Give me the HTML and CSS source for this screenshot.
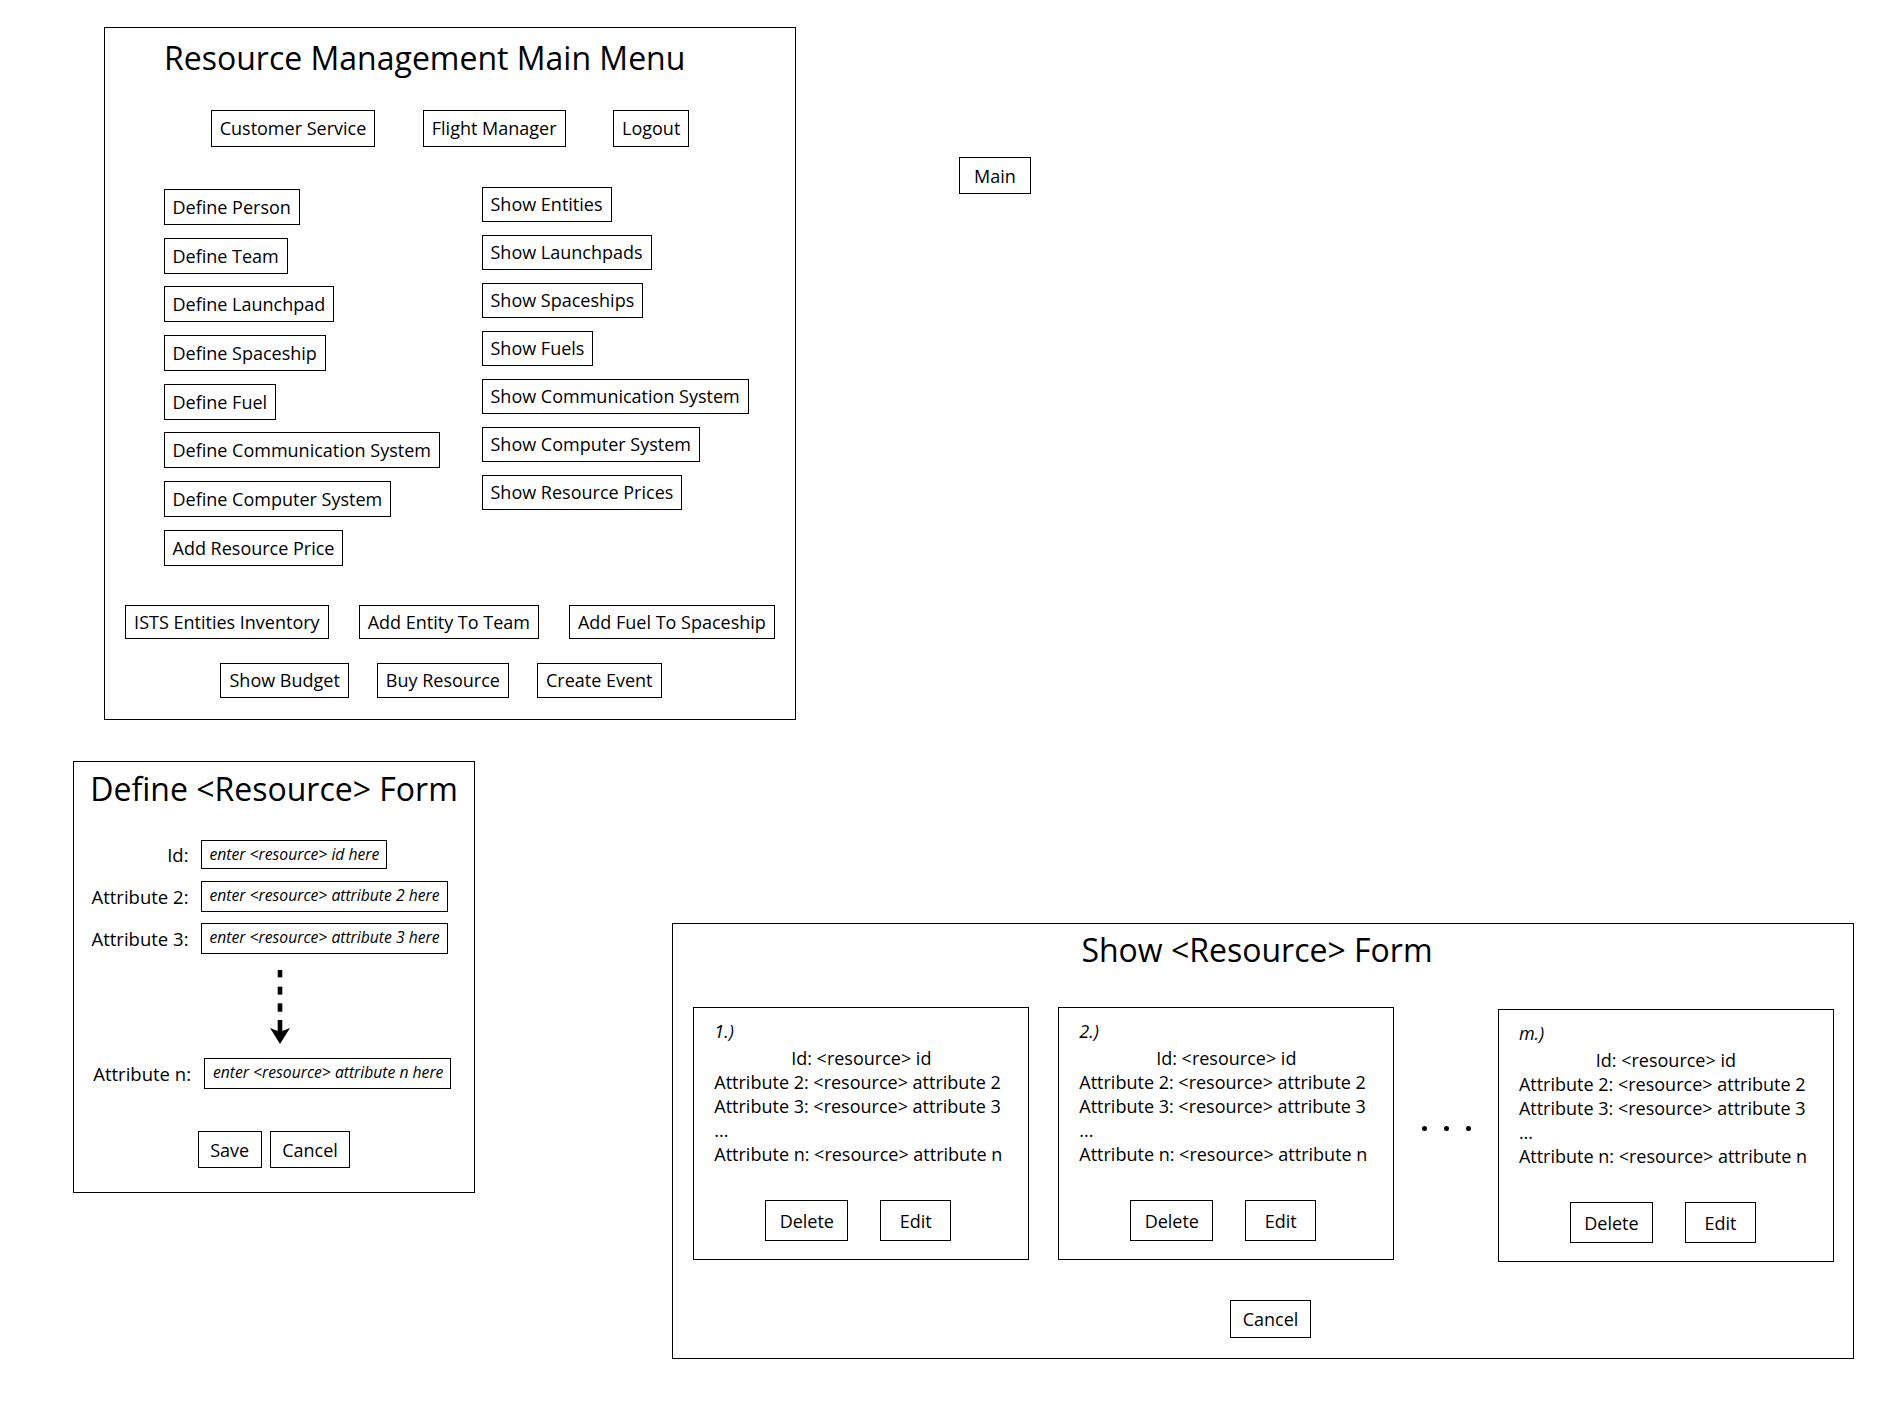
FILE: index.html
```html
<!DOCTYPE html>
<html lang="en">
<head>
    <meta charset="UTF-8">
    <meta name="viewport" content="width=device-width, initial-scale=1.0">
    <title>Resource Management Mockups</title>
    <link rel="stylesheet" href="styles.css">
</head>
<body>
    <div class="canvas">

        <!-- main menu window -->
        <section class="panel main-menu">
            <h1 class="panel-title">Resource Management Main Menu</h1>

            <div class="row row-top">
                <span class="btn">Customer Service</span>
                <span class="btn">Flight Manager</span>
                <span class="btn">Logout</span>
            </div>

            <div class="menu-columns">
                <div class="menu-col menu-col-define">
                    <span class="btn">Define Person</span>
                    <span class="btn">Define Team</span>
                    <span class="btn">Define Launchpad</span>
                    <span class="btn">Define Spaceship</span>
                    <span class="btn">Define Fuel</span>
                    <span class="btn">Define Communication System</span>
                    <span class="btn">Define Computer System</span>
                    <span class="btn">Add Resource Price</span>
                </div>
                <div class="menu-col menu-col-show">
                    <span class="btn">Show Entities</span>
                    <span class="btn">Show Launchpads</span>
                    <span class="btn">Show Spaceships</span>
                    <span class="btn">Show Fuels</span>
                    <span class="btn">Show Communication System</span>
                    <span class="btn">Show Computer System</span>
                    <span class="btn">Show Resource Prices</span>
                </div>
            </div>

            <div class="row row-actions">
                <span class="btn">ISTS Entities Inventory</span>
                <span class="btn">Add Entity To Team</span>
                <span class="btn">Add Fuel To Spaceship</span>
            </div>

            <div class="row row-extra">
                <span class="btn">Show Budget</span>
                <span class="btn">Buy Resource</span>
                <span class="btn">Create Event</span>
            </div>
        </section>

        <span class="btn main-link">Main</span>

        <!-- define form window -->
        <section class="panel define-form">
            <h2 class="panel-title">Define &lt;Resource&gt; Form</h2>

            <div class="fields">
                <div class="field">
                    <span class="field-label">Id:</span>
                    <span class="field-input field-input-short">enter &lt;resource&gt; id here</span>
                </div>
                <div class="field">
                    <span class="field-label">Attribute 2:</span>
                    <span class="field-input">enter &lt;resource&gt; attribute 2 here</span>
                </div>
                <div class="field">
                    <span class="field-label">Attribute 3:</span>
                    <span class="field-input">enter &lt;resource&gt; attribute 3 here</span>
                </div>
            </div>

            <svg class="more-arrow" width="20" height="74" viewBox="0 0 20 74">
                <rect x="7.7" y="0" width="4.6" height="7.3"/>
                <rect x="7.7" y="16.7" width="4.6" height="8"/>
                <rect x="7.7" y="33.3" width="4.6" height="8.4"/>
                <polygon points="7.7,50 12.3,50 12.3,61 20,58 10,74 0,58 7.7,61"/>
            </svg>

            <div class="field field-last">
                <span class="field-label">Attribute n:</span>
                <span class="field-input">enter &lt;resource&gt; attribute n here</span>
            </div>

            <div class="row form-actions">
                <span class="btn">Save</span>
                <span class="btn">Cancel</span>
            </div>
        </section>

        <!-- show form window -->
        <section class="panel show-form">
            <h2 class="panel-title">Show &lt;Resource&gt; Form</h2>

            <div class="cards">
                <div class="card">
                    <div class="card-num">1.)</div>
                    <div class="card-line card-center">Id: &lt;resource&gt; id</div>
                    <div class="card-line">Attribute 2: &lt;resource&gt; attribute 2</div>
                    <div class="card-line">Attribute 3: &lt;resource&gt; attribute 3</div>
                    <div class="card-line">...</div>
                    <div class="card-line">Attribute n: &lt;resource&gt; attribute n</div>
                    <div class="card-actions">
                        <span class="btn btn-delete">Delete</span>
                        <span class="btn btn-edit">Edit</span>
                    </div>
                </div>

                <div class="card">
                    <div class="card-num">2.)</div>
                    <div class="card-line card-center">Id: &lt;resource&gt; id</div>
                    <div class="card-line">Attribute 2: &lt;resource&gt; attribute 2</div>
                    <div class="card-line">Attribute 3: &lt;resource&gt; attribute 3</div>
                    <div class="card-line">...</div>
                    <div class="card-line">Attribute n: &lt;resource&gt; attribute n</div>
                    <div class="card-actions">
                        <span class="btn btn-delete">Delete</span>
                        <span class="btn btn-edit">Edit</span>
                    </div>
                </div>

                <div class="ellipsis">
                    <span class="dot"></span>
                    <span class="dot"></span>
                    <span class="dot"></span>
                </div>

                <div class="card card-last">
                    <div class="card-num">m.)</div>
                    <div class="card-line card-center">Id: &lt;resource&gt; id</div>
                    <div class="card-line">Attribute 2: &lt;resource&gt; attribute 2</div>
                    <div class="card-line">Attribute 3: &lt;resource&gt; attribute 3</div>
                    <div class="card-line">...</div>
                    <div class="card-line">Attribute n: &lt;resource&gt; attribute n</div>
                    <div class="card-actions">
                        <span class="btn btn-delete">Delete</span>
                        <span class="btn btn-edit">Edit</span>
                    </div>
                </div>
            </div>

            <div class="row show-actions">
                <span class="btn">Cancel</span>
            </div>
        </section>

    </div>
</body>
</html>
```

FILE: styles.css
```css
body {
    margin: 0;
    background: #fff;
    color: #000;
    font-family: "Open Sans", "Noto Sans", sans-serif;
    font-size: 18px;
    overflow: hidden;
}

.canvas {
    position: relative;
    width: 1903px;
    height: 1419px;
}

/* each mockup window sits on the canvas where it was drawn */
.panel {
    position: absolute;
    box-sizing: border-box;
    border: 1px solid #000;
    background: #fff;
}

.panel-title {
    margin: 0;
    font-size: 32px;
    font-weight: 400;
    line-height: 44px;
}

.btn {
    display: inline-flex;
    align-items: center;
    justify-content: center;
    box-sizing: border-box;
    height: 36px;
    padding: 0 8px;
    border: 1px solid #000;
    white-space: nowrap;
    font-size: 18px;
}

.row {
    display: flex;
    align-items: center;
    justify-content: center;
}

/* ---------- main menu ---------- */
.main-menu {
    left: 104px;
    top: 27px;
    width: 692px;
    height: 693px;
    padding-top: 8px;
}

.main-menu .panel-title {
    padding-left: 59px;
}

.row-top {
    margin-top: 29px;
    height: 38px;
    gap: 47.5px;
}

.row-top .btn {
    height: 37px;
}

.menu-columns {
    display: flex;
    align-items: flex-start;
    margin-top: 42px;
    padding-left: 58.5px;
}

.menu-col {
    display: flex;
    flex-direction: column;
    align-items: flex-start;
}

.menu-col-define {
    width: 318px;
    gap: 12.7px;
}

.menu-col-show {
    margin-top: -2px;
    gap: 13.5px;
}

.menu-col-show .btn {
    height: 34.5px;
}

.row-actions {
    margin-top: 39.5px;
    gap: 30px;
}

.row-actions .btn {
    height: 34px;
}

.row-extra {
    margin-top: 23.6px;
    gap: 28px;
    padding-right: 18px;
}

.row-extra .btn {
    height: 35px;
}

.main-link {
    position: absolute;
    left: 959px;
    top: 157px;
    width: 72px;
    height: 37px;
}

/* ---------- define form ---------- */
.define-form {
    left: 73px;
    top: 761px;
    width: 402px;
    height: 432px;
    padding-top: 5px;
}

.define-form .panel-title {
    text-align: center;
}

.fields {
    display: flex;
    flex-direction: column;
    gap: 11px;
    margin-top: 28px;
}

.field {
    display: flex;
    align-items: center;
    min-height: 31px;
}

.field-label {
    width: 114.5px;
    text-align: right;
    font-size: 18.5px;
}

.field-input {
    box-sizing: border-box;
    height: 31px;
    margin-left: 12px;
    padding: 0 7px 0 8px;
    border: 1px solid #000;
    font-size: 15.7px;
    font-style: italic;
    line-height: 26px;
    white-space: nowrap;
}

.field-input-short {
    height: 29px;
}

.more-arrow {
    display: block;
    margin: 16px 0 0 196px;
    fill: #000;
}

.field-last {
    margin-top: 14px;
}

.field-last .field-label {
    width: 117px;
}

.field-last .field-input {
    margin-left: 13px;
}

.form-actions {
    margin-top: 42px;
    gap: 8px;
}

.form-actions .btn {
    height: 37px;
    padding: 0 11.5px;
}

/* ---------- show form ---------- */
.show-form {
    left: 672px;
    top: 923px;
    width: 1182px;
    height: 436px;
    padding-top: 4px;
}

.show-form .panel-title {
    text-align: center;
    padding-right: 12px;
}

.cards {
    display: flex;
    align-items: flex-start;
    margin-top: 35.3px;
    padding-left: 20.3px;
}

.card {
    box-sizing: border-box;
    width: 336px;
    height: 253px;
    padding: 11px 20px 0;
    border: 1px solid #000;
    line-height: 24px;
}

.card + .card {
    margin-left: 29px;
}

.card-last {
    margin-top: 2px;
}

.card-num {
    font-style: italic;
    margin-bottom: 2.7px;
}

.card-line {
    white-space: nowrap;
}

.card-center {
    text-align: center;
}

.card-actions {
    display: flex;
    gap: 32px;
    margin-top: 34.3px;
    padding-left: 51px;
}

.card-actions .btn {
    height: 41px;
    padding: 0;
}

.btn-delete {
    width: 83px;
}

.btn-edit {
    width: 71px;
}

.ellipsis {
    display: flex;
    align-items: center;
    justify-content: center;
    gap: 17px;
    width: 103.6px;
    height: 253px;
    box-sizing: border-box;
    padding-bottom: 10px;
}

.dot {
    width: 5px;
    height: 5px;
    border-radius: 50%;
    background: #000;
}

.show-actions {
    margin-top: 38px;
    padding-left: 15px;
}

.show-actions .btn {
    height: 38px;
    padding: 0 12px;
}
```
